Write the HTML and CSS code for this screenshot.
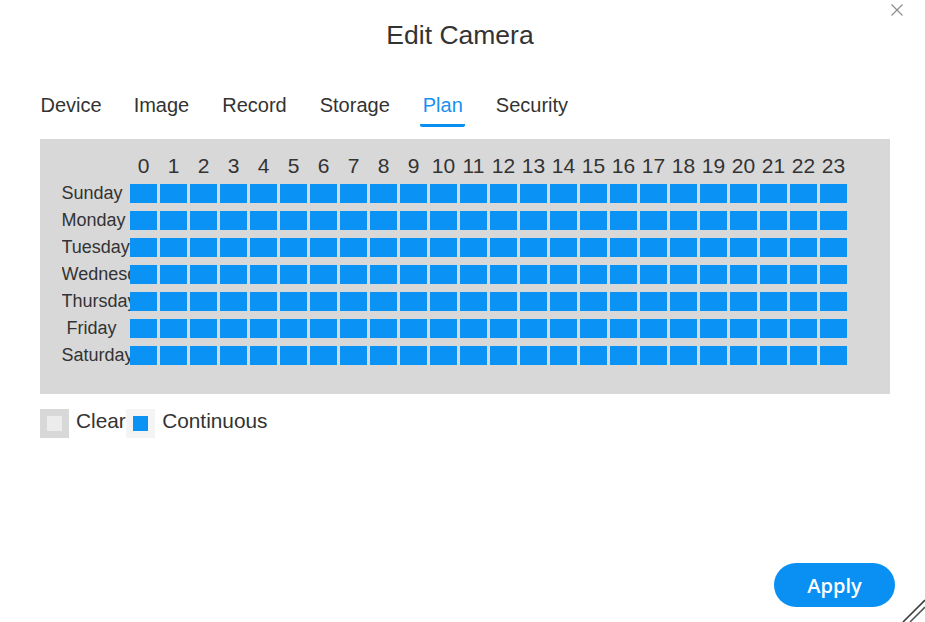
FILE: index.html
```html
<!DOCTYPE html>
<html>
<head>
<meta charset="utf-8">
<link rel="stylesheet" href="styles.css">
</head>
<body>
<div class="dialog">
  <button class="close" aria-label="Close">
    <svg width="12" height="12" viewBox="0 0 12 12"><path d="M0.5 0.5 L11.5 11.5 M11.5 0.5 L0.5 11.5" stroke="#8a8a8a" stroke-width="1.1" fill="none"/></svg>
  </button>
  <h1 class="title">Edit Camera</h1>
  <nav class="tabs">
    <span class="tab">Device</span>
    <span class="tab">Image</span>
    <span class="tab">Record</span>
    <span class="tab">Storage</span>
    <span class="tab active">Plan</span>
    <span class="tab">Security</span>
  </nav>
  <div class="plan">
    <div class="row header">
      <div class="label"></div>
      <div class="cells" id="hours"></div>
    </div>
    <div id="days"></div>
  </div>
  <div class="legend">
    <span class="swatch clear"><span class="inner"></span></span>
    <span class="legend-text first">Clear</span>
    <span class="swatch cont"><span class="inner"></span></span>
    <span class="legend-text">Continuous</span>
  </div>
  <div class="footer">
    <button class="apply">Apply</button>
  </div>
  <svg class="resize" width="25" height="25" viewBox="0 0 25 25">
    <path d="M3 25 L25 3" stroke="#3a3a3a" stroke-width="1.6"/>
    <path d="M10 25 L25 10" stroke="#555" stroke-width="1.6"/>
  </svg>
</div>
<script src="app.js"></script>
</body>
</html>
```
FILE: app.js
```js
const hours = document.getElementById('hours');
for (let h = 0; h < 24; h++) {
  const d = document.createElement('div');
  d.className = 'hour';
  d.textContent = h;
  hours.appendChild(d);
}
const days = ['Sunday','Monday','Tuesday','Wednesday','Thursday','Friday','Saturday'];
const wrap = document.getElementById('days');
days.forEach(name => {
  const row = document.createElement('div');
  row.className = 'row day';
  const label = document.createElement('div');
  label.className = 'label';
  const inner = document.createElement('div');
  inner.className = 'label-text';
  inner.textContent = name;
  label.appendChild(inner);
  row.appendChild(label);
  const cells = document.createElement('div');
  cells.className = 'cells';
  for (let h = 0; h < 24; h++) {
    const c = document.createElement('div');
    c.className = 'cell';
    cells.appendChild(c);
  }
  row.appendChild(cells);
  wrap.appendChild(row);
});
```
FILE: styles.css
```css
* { box-sizing: border-box; }
html, body { margin: 0; padding: 0; background: #fff; }
body {
  font-family: "Liberation Sans", Arial, sans-serif;
  color: #333;
}
.dialog {
  position: relative;
  width: 925px;
  height: 622px;
  display: flex;
  flex-direction: column;
  overflow: hidden;
}
.close {
  position: absolute;
  top: 4px;
  left: 891px;
  padding: 0;
  border: 0;
  background: none;
  width: 12px;
  height: 12px;
  line-height: 0;
}
.title {
  margin: 19px 0 0 0;
  padding-right: 5px;
  font-size: 26.5px;
  font-weight: normal;
  line-height: 32px;
  height: 32px;
  text-align: center;
  color: #333;
}
.tabs {
  display: flex;
  gap: 28px;
  margin: 42px 0 0 38px;
}
.tab {
  font-size: 20px;
  line-height: 24px;
  padding: 0 2.5px 7px;
  border-bottom: 3px solid transparent;
  color: #333;
}
.tab:first-child { margin-right: -1px; }
.tab.active {
  color: #1a90f0;
  border-bottom-color: #0a8ff0;
  border-radius: 0 0 2px 2px;
}
.plan {
  margin: 12px 35px 0 40px;
  background: #d8d8d8;
  padding: 15px 0 29px 21.5px;
}
.row { display: flex; }
.header { height: 24px; margin-bottom: 6px; }
.label {
  width: 68.5px;
  flex: none;
  overflow: hidden;
}
.label-text {
  width: 60px;
  text-align: center;
  white-space: nowrap;
  font-size: 18px;
  line-height: 19px;
}
.cells { display: flex; gap: 3px; }
.hour {
  width: 27px;
  text-align: center;
  font-size: 21px;
  line-height: 24px;
  white-space: nowrap;
  display: flex;
  justify-content: center;
}
.day { height: 19px; margin-bottom: 8px; }
.day:last-child { margin-bottom: 0; }
.cell {
  width: 27px;
  height: 19px;
  background: #0a92f4;
}
.legend {
  display: flex;
  align-items: flex-start;
  margin: 15px 0 0 40px;
  height: 29px;
}
.swatch {
  width: 29px;
  height: 29px;
  display: flex;
  align-items: center;
  justify-content: center;
  flex: none;
}
.swatch .inner { width: 15px; height: 15px; }
.swatch.clear { background: #d8d8d8; }
.swatch.clear .inner { background: #ececec; }
.swatch.cont { background: #f4f4f4; }
.swatch.cont .inner { background: #0a92f4; }
.legend-text {
  font-size: 20.8px;
  line-height: 23px;
  margin-left: 7.5px;
  color: #333;
}
.legend-text.first { margin-left: 7px; margin-right: 0; }
.footer {
  margin-top: auto;
  display: flex;
  justify-content: flex-end;
  padding: 0 30px 15px 0;
}
.apply {
  width: 121px;
  height: 44px;
  border: 0;
  border-radius: 22px;
  background: #0a90f2;
  color: #fff;
  font-family: "Open Sans", "Liberation Sans", sans-serif;
  font-size: 20px;
  font-weight: 600;
  padding: 0;
}
.resize {
  position: absolute;
  right: 0;
  bottom: 0;
}
```
